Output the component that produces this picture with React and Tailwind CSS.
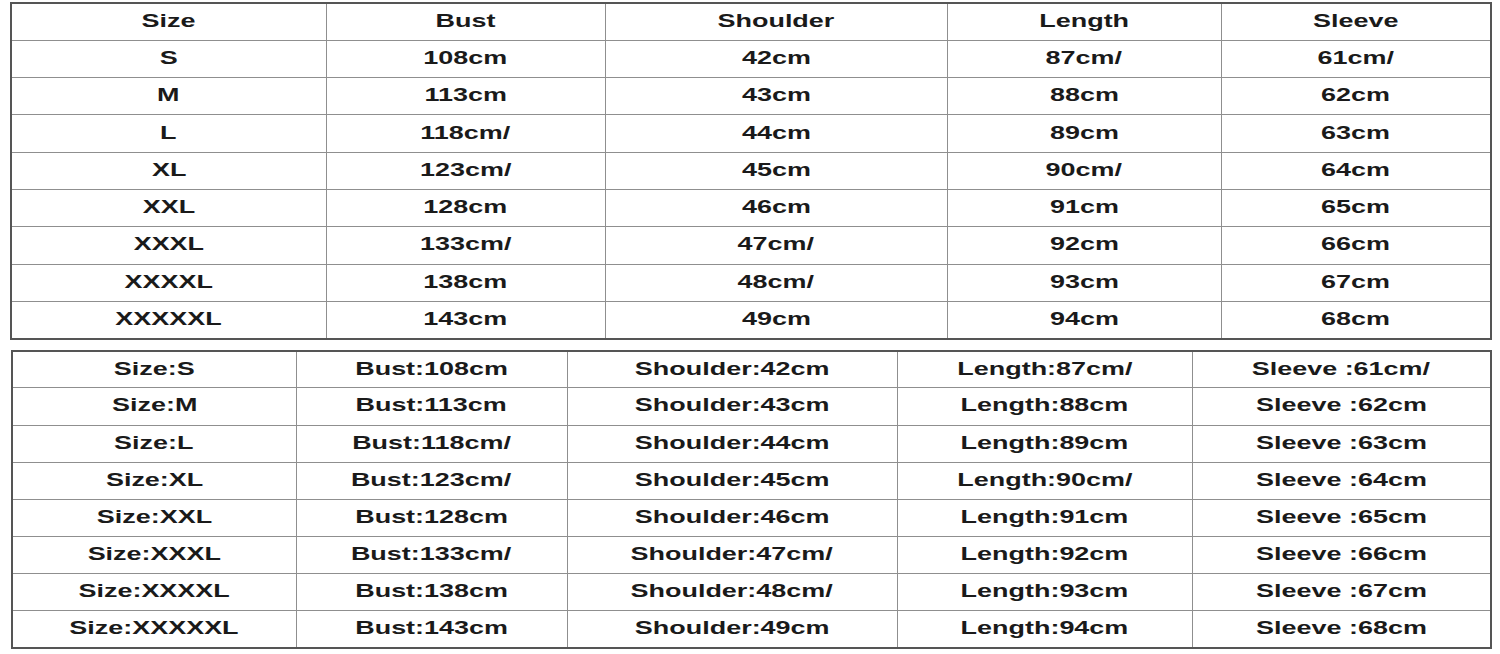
import React from "react";

const sizes = ["S", "M", "L", "XL", "XXL", "XXXL", "XXXXL", "XXXXXL"];
const bust = ["108cm", "113cm", "118cm/", "123cm/", "128cm", "133cm/", "138cm", "143cm"];
const shoulder = ["42cm", "43cm", "44cm", "45cm", "46cm", "47cm/", "48cm/", "49cm"];
const length = ["87cm/", "88cm", "89cm", "90cm/", "91cm", "92cm", "93cm", "94cm"];
const sleeve = ["61cm/", "62cm", "63cm", "64cm", "65cm", "66cm", "67cm", "68cm"];

function Cell({ children }) {
    return (
        <td className="border border-[#8f8f8f] p-0 text-center align-middle">
            <span className="inline-block scale-x-[1.54] text-[17.5px] font-bold leading-none text-[#1a1a1a]">
                {children}
            </span>
        </td>
    );
}

export default function App() {
    const rows1 = sizes.map((s, i) => [s, bust[i], shoulder[i], length[i], sleeve[i]]);
    const rows2 = sizes.map((s, i) => [
        "Size:" + s,
        "Bust:" + bust[i],
        "Shoulder:" + shoulder[i],
        "Length:" + length[i],
        "Sleeve :" + sleeve[i],
    ]);

    return (
        <div
            className="h-[654px] w-[1500px] bg-white pl-[10px] pt-[2px]"
            style={{ fontFamily: '"Liberation Sans", Arial, sans-serif' }}
        >
            <table className="w-[1480px] table-fixed border-collapse border-2 border-[#555]">
                <colgroup>
                    <col className="w-[315px]" />
                    <col className="w-[279px]" />
                    <col className="w-[342px]" />
                    <col className="w-[274px]" />
                    <col className="w-[270px]" />
                </colgroup>
                <tbody>
                    <tr className="h-[37.3px]">
                        <Cell>Size</Cell>
                        <Cell>Bust</Cell>
                        <Cell>Shoulder</Cell>
                        <Cell>Length</Cell>
                        <Cell>Sleeve</Cell>
                    </tr>
                    {rows1.map((r) => (
                        <tr key={r[0]} className="h-[37.3px]">
                            {r.map((v, j) => (
                                <Cell key={j}>{v}</Cell>
                            ))}
                        </tr>
                    ))}
                </tbody>
            </table>

            <table className="ml-[1px] mt-[10px] w-[1479px] table-fixed border-collapse border-2 border-[#555]">
                <colgroup>
                    <col className="w-[284px]" />
                    <col className="w-[271px]" />
                    <col className="w-[330px]" />
                    <col className="w-[295px]" />
                    <col className="w-[299px]" />
                </colgroup>
                <tbody>
                    {rows2.map((r) => (
                        <tr key={r[0]} className="h-[37.2px]">
                            {r.map((v, j) => (
                                <Cell key={j}>{v}</Cell>
                            ))}
                        </tr>
                    ))}
                </tbody>
            </table>
        </div>
    );
}
